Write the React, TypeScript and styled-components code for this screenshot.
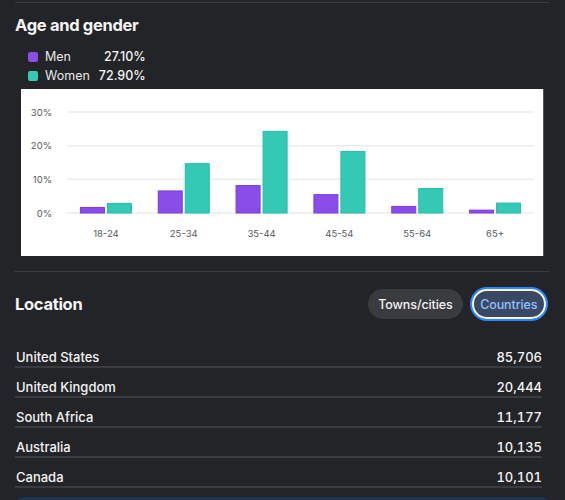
import React, { useState } from 'react';
import styled, { createGlobalStyle } from 'styled-components';

const GlobalStyle = createGlobalStyle`
  html, body {
    margin: 0;
    padding: 0;
    background: #232427;
    overflow: hidden;
  }
  body {
    font-family: Inter, "Noto Sans", "Liberation Sans", sans-serif;
    color: #f4f4f5;
  }
`;

const Page = styled.div`
  width: 565px;
  height: 500px;
  padding: 2px 16px 0 15px;
  box-sizing: border-box;
  overflow: hidden;
`;

const Divider = styled.div<{ $inset?: number }>`
  height: 1px;
  background: #3a3b3f;
  margin-left: ${p => -(p.$inset ?? 0)}px;
`;

const SectionTitle = styled.h2`
  margin: 0;
  font-size: 16.5px;
  line-height: 22px;
  font-weight: 700;
  color: #f5f5f6;
  letter-spacing: -0.3px;
`;

const AgeTitle = styled(SectionTitle)`
  margin-top: 11px;
`;

const Legend = styled.div`
  display: grid;
  grid-template-columns: 10px auto auto;
  column-gap: 7px;
  row-gap: 0;
  justify-content: start;
  align-items: center;
  margin: 11px 0 0 13px;
  font-size: 12.5px;
  line-height: 19px;
`;

const Swatch = styled.span<{ $color: string }>`
  width: 10px;
  height: 10px;
  border-radius: 2px;
  background: ${p => p.$color};
`;

const LegendLabel = styled.span`
  color: #e8e8ea;
  padding-right: 2px;
`;

const LegendValue = styled.span`
  text-align: right;
  color: #f2f2f3;
  font-weight: 500;
`;

const ChartBox = styled.div`
  margin: 4px 0 0 6px;
  width: 522px;
  height: 167px;
  background: #ffffff;
  box-shadow: 1px 0 0 #55565a;
`;

const Spacer = styled.div<{ $h: number }>`
  height: ${p => p.$h}px;
`;

const LocationHeader = styled.div`
  display: flex;
  align-items: center;
  justify-content: space-between;
  margin-top: 17px;
  padding-right: 3px;
`;

const Pills = styled.div`
  display: flex;
  gap: 9px;
  align-items: center;
`;

const Pill = styled.button<{ $active?: boolean }>`
  height: 30px;
  padding: 0 ${p => (p.$active ? '6.5px' : '10px')};
  border-radius: 15px;
  font-family: inherit;
  font-size: 12.5px;
  letter-spacing: -0.1px;
  font-weight: 500;
  cursor: pointer;
  border: ${p => (p.$active ? '2px solid #f3f6fb' : 'none')};
  background: ${p => (p.$active ? '#3a4863' : '#3a3b3e')};
  color: ${p => (p.$active ? '#8dc1ff' : '#f2f2f3')};
  box-shadow: ${p => (p.$active ? '0 0 0 2px #2a85ff' : 'none')};
`;

const List = styled.div`
  margin: 19px 7px 0 0;
`;

const Row = styled.div`
  display: flex;
  justify-content: space-between;
  padding: 10px 0 0 1px;
  height: 18px;
  line-height: 18px;
  border-bottom: 2px solid #3a3b3e;
  font-size: 13px;
  font-weight: 500;
  color: #f3f3f4;
`;

const Value = styled.span`
  font-variant-numeric: tabular-nums;
`;

const BottomBar = styled.div`
  margin: 9px -1px 0 0;
  height: 20px;
  border-radius: 8px 8px 0 0;
  background: #1f3352;
`;

const PURPLE = '#8a4de9';
const PURPLE_EDGE = '#7a3be0';
const GREEN = '#33c9b4';
const GREEN_EDGE = '#22bea7';

const ageData = [
  { label: '18-24', men: 1.8, women: 3.0 },
  { label: '25-34', men: 6.7, women: 14.8 },
  { label: '35-44', men: 8.3, women: 24.4 },
  { label: '45-54', men: 5.6, women: 18.4 },
  { label: '55-64', men: 2.1, women: 7.4 },
  { label: '65+', men: 1.0, women: 3.1 },
];

const countries = [
  { name: 'United States', value: '85,706' },
  { name: 'United Kingdom', value: '20,444' },
  { name: 'South Africa', value: '11,177' },
  { name: 'Australia', value: '10,135' },
  { name: 'Canada', value: '10,101' },
];

// chart geometry (px inside the white box)
const PLOT_LEFT = 46;
const PLOT_RIGHT = 513;
const ZERO_Y = 124;
const PX_PER_PCT = 101 / 30;

const AgeChart: React.FC = () => {
  const band = (PLOT_RIGHT - PLOT_LEFT) / ageData.length;
  const ticks = [0, 10, 20, 30];
  return (
    <svg width="522" height="167" viewBox="0 0 522 167">
      {ticks.map(t => {
        const y = ZERO_Y - t * PX_PER_PCT;
        return (
          <g key={t}>
            <line x1={PLOT_LEFT} x2={PLOT_RIGHT} y1={y} y2={y} stroke="#ececec" strokeWidth="1.5" />
            <text
              x={31}
              y={y + 3.5}
              textAnchor="end"
              fontSize="9.5"
              fill="#55595e"
              fontFamily="Inter, 'Liberation Sans', sans-serif"
            >
              {t}%
            </text>
          </g>
        );
      })}
      {ageData.map((d, i) => {
        const cx = PLOT_LEFT + band * (i + 0.5);
        const mh = d.men * PX_PER_PCT;
        const wh = d.women * PX_PER_PCT;
        return (
          <g key={d.label}>
            <rect x={cx - 25.5} y={ZERO_Y - mh + 0.5} width={24} height={mh - 0.5} fill={PURPLE} stroke={PURPLE_EDGE} strokeWidth="1" />
            <rect x={cx + 1.5} y={ZERO_Y - wh + 0.5} width={24} height={wh - 0.5} fill={GREEN} stroke={GREEN_EDGE} strokeWidth="1" />
            <text
              x={cx}
              y={148}
              textAnchor="middle"
              fontSize="9.5"
              fill="#55595e"
              fontFamily="Inter, 'Liberation Sans', sans-serif"
            >
              {d.label}
            </text>
          </g>
        );
      })}
    </svg>
  );
};

const App: React.FC = () => {
  const [mode, setMode] = useState<'towns' | 'countries'>('countries');

  return (
    <Page>
      <GlobalStyle />
      <Divider />
      <AgeTitle>Age and gender</AgeTitle>
      <Legend>
        <Swatch $color={PURPLE} />
        <LegendLabel>Men</LegendLabel>
        <LegendValue>27.10%</LegendValue>
        <Swatch $color={GREEN} />
        <LegendLabel>Women</LegendLabel>
        <LegendValue>72.90%</LegendValue>
      </Legend>
      <ChartBox>
        <AgeChart />
      </ChartBox>

      <Spacer $h={15} />
      <Divider $inset={1} />
      <LocationHeader>
        <SectionTitle>Location</SectionTitle>
        <Pills>
          <Pill $active={mode === 'towns'} onClick={() => setMode('towns')}>Towns/cities</Pill>
          <Pill $active={mode === 'countries'} onClick={() => setMode('countries')}>Countries</Pill>
        </Pills>
      </LocationHeader>

      <List>
        {countries.map(c => (
          <Row key={c.name}>
            <span>{c.name}</span>
            <Value>{c.value}</Value>
          </Row>
        ))}
      </List>
      <BottomBar />
    </Page>
  );
};

export default App;
